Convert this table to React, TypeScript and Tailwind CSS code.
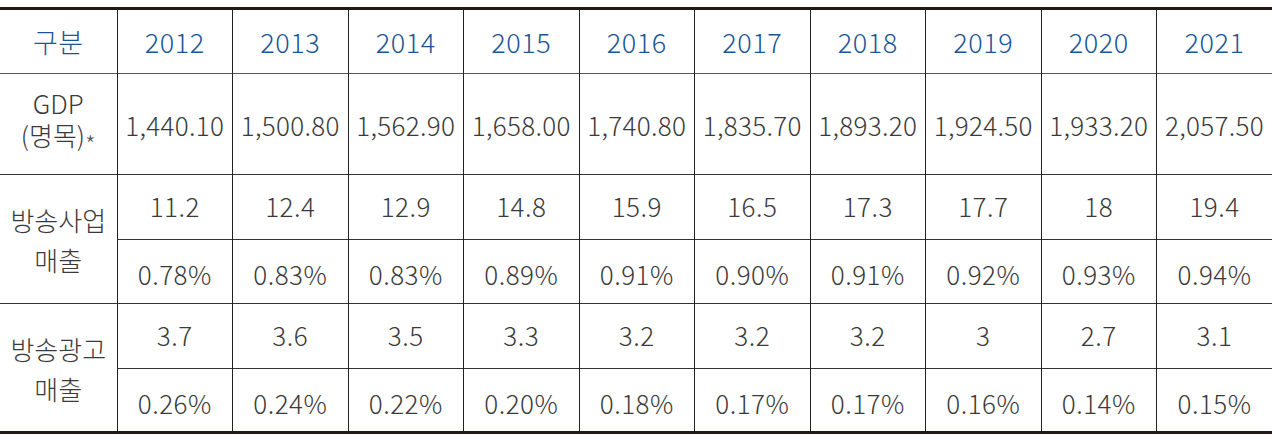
const years = ["2012", "2013", "2014", "2015", "2016", "2017", "2018", "2019", "2020", "2021"];

const gdp = ["1,440.10", "1,500.80", "1,562.90", "1,658.00", "1,740.80", "1,835.70", "1,893.20", "1,924.50", "1,933.20", "2,057.50"];

const groups = [
  {
    label: ["방송사업", "매출"],
    rows: [
      ["11.2", "12.4", "12.9", "14.8", "15.9", "16.5", "17.3", "17.7", "18", "19.4"],
      ["0.78%", "0.83%", "0.83%", "0.89%", "0.91%", "0.90%", "0.91%", "0.92%", "0.93%", "0.94%"],
    ],
  },
  {
    label: ["방송광고", "매출"],
    rows: [
      ["3.7", "3.6", "3.5", "3.3", "3.2", "3.2", "3.2", "3", "2.7", "3.1"],
      ["0.26%", "0.24%", "0.22%", "0.20%", "0.18%", "0.17%", "0.17%", "0.16%", "0.14%", "0.15%"],
    ],
  },
];

const font = { fontFamily: '"Noto Sans CJK KR", "Noto Sans", sans-serif' };

export default function App() {
  return (
    <div className="w-[1280px] h-[440px] bg-white pt-[7px]" style={font}>
      <table className="w-[1272px] table-fixed border-collapse text-[26px] font-light text-[#3a3a3a] tracking-[0.5px]">
        <colgroup>
          <col className="w-[117px]" />
          {years.map((y) => (
            <col key={y} />
          ))}
        </colgroup>
        <thead>
          <tr className="h-[65px] border-t-[3px] border-b border-t-[#231815] border-b-[#555]">
            <th className="font-light text-[27px] text-[#1a5596] pt-[2px]">구분</th>
            {years.map((y) => (
              <th key={y} className="font-light text-[27px] text-[#1a5596] border-l border-[#222] pt-[2px]">
                {y}
              </th>
            ))}
          </tr>
        </thead>
        <tbody>
          <tr className="h-[101px] border-b border-[#333]">
            <td className="text-center leading-[32px] pb-[2px] tracking-normal">
              GDP
              <br />
              (명목)<span className="text-[24px] align-[-8px] text-[#555]">*</span>
            </td>
            {gdp.map((v, i) => (
              <td key={i} className="text-center border-l border-[#222] whitespace-nowrap tracking-[0.3px]">
                {v}
              </td>
            ))}
          </tr>
          {groups.map((g, gi) => (
            <>
              <tr key={gi + "a"} className="h-[65px] border-b border-[#333]">
                <td
                  rowSpan={2}
                  className={
                    "text-center leading-[40px] pt-[2px] tracking-normal " +
                    (gi === 1 ? "border-b-[3px] border-b-[#231815]" : "border-b border-[#333]")
                  }
                >
                  <div>{g.label[0]}</div>
                  <div>{g.label[1]}</div>
                </td>
                {g.rows[0].map((v, i) => (
                  <td key={i} className="text-center border-l border-[#222] pb-[3px]">
                    {v}
                  </td>
                ))}
              </tr>
              <tr
                key={gi + "b"}
                className={"h-[64px] " + (gi === 1 ? "border-b-[3px] border-b-[#231815]" : "border-b border-[#333]")}
              >
                {g.rows[1].map((v, i) => (
                  <td key={i} className="text-center border-l border-[#222] pt-[4px]">
                    {v}
                  </td>
                ))}
              </tr>
            </>
          ))}
        </tbody>
      </table>
    </div>
  );
}
